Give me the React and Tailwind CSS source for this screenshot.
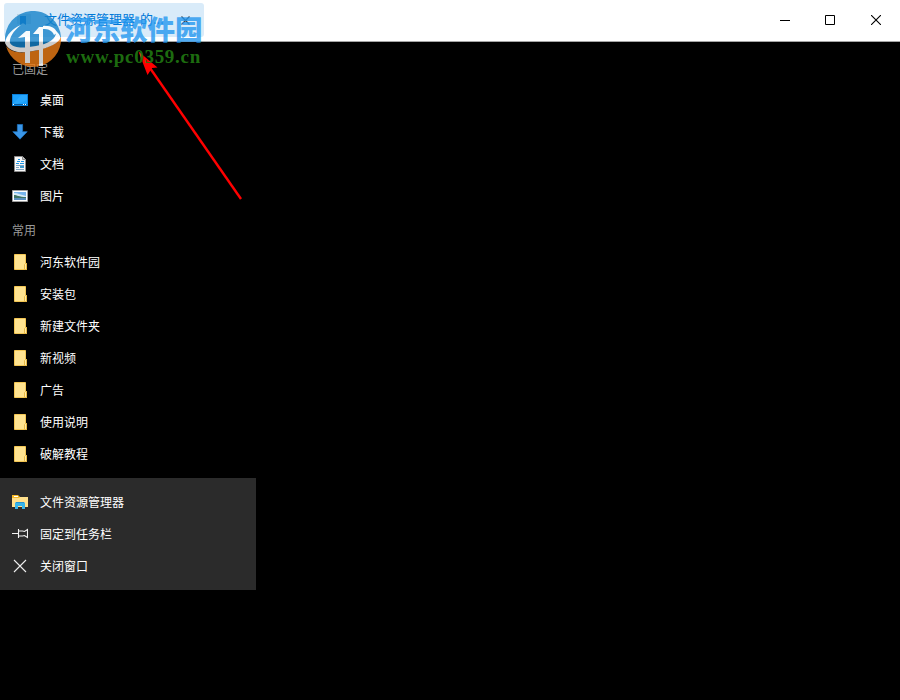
import React from 'react';

const pinned = [
  { label: '桌面', icon: 'desktop' },
  { label: '下载', icon: 'download' },
  { label: '文档', icon: 'document' },
  { label: '图片', icon: 'picture' },
];

const frequent = ['河东软件园', '安装包', '新建文件夹', '新视频', '广告', '使用说明', '破解教程'];

const tasks = [
  { label: '文件资源管理器', icon: 'explorer' },
  { label: '固定到任务栏', icon: 'pin' },
  { label: '关闭窗口', icon: 'close' },
];

const icons = {
  desktop: (
    <>
      <path fill="#0a7fd9" d="M0 2h16v12H0z" />
      <path fill="#1ba0fb" d="M1 3h14v9H1z" />
      <path fill="#35adff" d="M9 3h6v5L5 12H1z" opacity=".5" />
      <path fill="#075a9e" d="M1 12h14v1H1z" />
      <path fill="#fff" d="M1 12h1v1H1zM11 12h1v1h-1zM13 12h1v1h-1z" />
    </>
  ),
  download: <path fill="#3a96e8" stroke="#1f78c9" strokeWidth=".7" d="M5.4.4h5.2v7.3h4.6L8 15.2.8 7.7h4.6z" />,
  document: (
    <>
      <path fill="#f8f8f8" stroke="#8c8c8c" d="M2.5.5h8l3 3v12h-11z" />
      <path fill="#c9c9c9" stroke="#8c8c8c" d="M10.5.5v3h3" />
      <path fill="none" stroke="#1b94e4" strokeWidth="1.2" d="M6 3.5h2M5 5.5h3M9 5.5h3M4 7.5h3M8 7.5h4" />
      <path fill="none" stroke="#7fa5c4" d="M4 9.5h8M4 11.5h3M4 13.5h8" />
      <path fill="#3d9ad0" d="M8 10h4v2H8z" />
    </>
  ),
  picture: (
    <>
      <path fill="#fff" stroke="#a0a0a0" d="M.5 2.500h15v11H.5z" />
      <path fill="#78b5ec" d="M2 4h12v8H2z" />
      <path fill="#d7ebf7" d="M2 5c4 0 7 2 12 3v1H2z" />
      <path fill="#3f7565" d="M2 7c3 0 5 2 12 2v1H2z" />
      <path fill="#5b8fbd" d="M2 10h12v2H2z" />
    </>
  ),
  folder: (
    <>
      <path fill="#ffe390" stroke="#f3c653" d="M2.500.5h11v9h1v6h-12z" />
      <path fill="#ffe9a6" stroke="#e8b943" d="M12.500 15.500v-5l1-1h1v6z" />
    </>
  ),
  explorer: (
    <>
      <path fill="#f5b927" d="M0 1h6l2 2h8v10H0z" />
      <path fill="#fff" d="M2 2h4v1H2z" />
      <path fill="#ffe08c" d="M0 4h7l1-1h8v10H0z" />
      <path fill="#35b4ea" d="M3 15V9l1-1h8l1 1v6h-3v-3H6v3z" />
      <path fill="#2391cf" d="M4 8h8v1H4z" />
    </>
  ),
  pin: (
    <path fill="none" stroke="#f2f2f2" strokeWidth="1.1" d="M0 7.5h6M6.5 3v9M6.5 5h4l2 .5 3-2v8l-3-2-2 .5h-4" />
  ),
  close: <path stroke="#eee" strokeWidth="1.1" d="M2 2l12 12M14 2L2 14" />,
};

const Row = ({ icon, label }) => (
  <li className="flex h-8 items-center gap-3 pl-3">
    <svg className="h-4 w-4 shrink-0" viewBox="0 0 16 16">{icons[icon]}</svg>
    <span className="text-xs leading-4 text-white">{label}</span>
  </li>
);

const TitleBar = () => (
  <header className="flex h-[42px] items-start justify-between border-b border-[#a5a5a5] bg-white">
    <div className="mt-[3px] ml-1 flex h-[34px] w-[200px] items-center rounded-[3px] bg-[#d9ebf9] pl-[13px]">
      <svg className="h-4 w-[14px]" viewBox="0 0 14 16">
        <path fill="#bdd3e3" d="M0 2h14v10H0z" />
        <path fill="#0063c4" d="M3 4h6v9l-3-2-3 2z" />
      </svg>
      <span className="mb-0.5 ml-[13px] w-[123px] text-[13px] leading-4 whitespace-nowrap text-[#0078d7] [word-spacing:2px]">
        文件资源管理器 的...
      </span>
      <svg className="ml-[14px] h-[9px] w-[9px]" viewBox="0 0 9 9">
        <path stroke="#3b4854" strokeWidth="1.2" d="M.5.5l8 8M8.5.5l-8 8" />
      </svg>
    </div>
    <div className="flex h-10 items-center">
      <svg className="mr-[35px] h-[10px] w-[10px]" viewBox="0 0 10 10">
        <path stroke="#000" d="M0 5.5h10" />
      </svg>
      <svg className="mr-[36px] h-[10px] w-[10px]" viewBox="0 0 10 10">
        <path fill="none" stroke="#000" d="M.5.5h9v9h-9z" />
      </svg>
      <svg className="mr-[19px] h-[10px] w-[10px]" viewBox="0 0 10 10">
        <path stroke="#000" strokeWidth="1.1" d="M0 0l10 10M10 0L0 10" />
      </svg>
    </div>
  </header>
);

const Watermark = () => (
  <div className="pointer-events-none absolute top-[11px] left-[5px] flex">
    <svg className="h-14 w-14 opacity-80" viewBox="0 0 56 56">
      <path fill="#1583ca" d="M0 30A28 28 0 0 1 56 26C50 34 38 38 27 39C13 41 3 38 0 30z" />
      <path fill="#ee7d16" d="M1 35C8 43 18 42 28 40C40 38 50 34 56 26A28 28 0 0 1 1 35z" />
      {/* swoosh between the two halves */}
      <path fill="#fff" d="M0 32C1 24 8 17 16 14C8 20 4 27 5 32C9 38 20 37 31 35C43 33 52 28 51 20C54 23 56 25 55 28C51 34 40 38 28 40C15 43 4 41 0 32z" />
      <path fill="#fff" d="M13 27L21 20H25V52H20V26zM28 23L34 16H38V55H34V23z" />
      <path fill="#fff" d="M38 15C45 14 51 17 52 22L49 24C47 19 43 18 38 18z" />
    </svg>
    <div className="ml-[4px] whitespace-nowrap">
      <div className="mt-[2px] h-8 text-[27.5px] leading-[30px] font-black text-[#2196ef]/80">河东软件园</div>
      <div className="ml-px h-[24px] font-['Liberation_Serif'] text-[19px] leading-[24px] font-bold tracking-[0.72px] text-[#217b12]/90">
        www.pc0359.cn
      </div>
    </div>
  </div>
);

const App = () => {
  return (
    <div className="relative h-[700px] w-[900px] overflow-hidden bg-black font-['Noto_Sans_CJK_SC',sans-serif]">
      <TitleBar />

      <main className="w-64">
        <h2 className="flex h-[42px] items-center pt-3 pl-3 text-xs text-[#999]">已固定</h2>
        <ul>
          {pinned.map((item) => (
            <Row key={item.label} icon={item.icon} label={item.label} />
          ))}
        </ul>

        <h2 className="flex h-[34px] items-center pt-[2px] pl-3 text-xs text-[#999]">常用</h2>
        <ul>
          {frequent.map((label) => (
            <Row key={label} icon="folder" label={label} />
          ))}
        </ul>

        <ul className="mt-2 bg-[#2b2b2b] py-2">
          {tasks.map((item) => (
            <Row key={item.label} icon={item.icon} label={item.label} />
          ))}
        </ul>
      </main>

      {/* Arrow pointing at the tab */}
      <svg className="pointer-events-none absolute top-[50px] left-[136px] h-[152px] w-[110px]" viewBox="0 0 110 152">
        <path stroke="#f00" strokeWidth="2.4" d="M14 18L105 149" />
        <path fill="#f00" d="M2.5 1.5L21.5 17.5L16 18L11.5 25z" />
      </svg>

      <Watermark />
    </div>
  );
};

export default App;
